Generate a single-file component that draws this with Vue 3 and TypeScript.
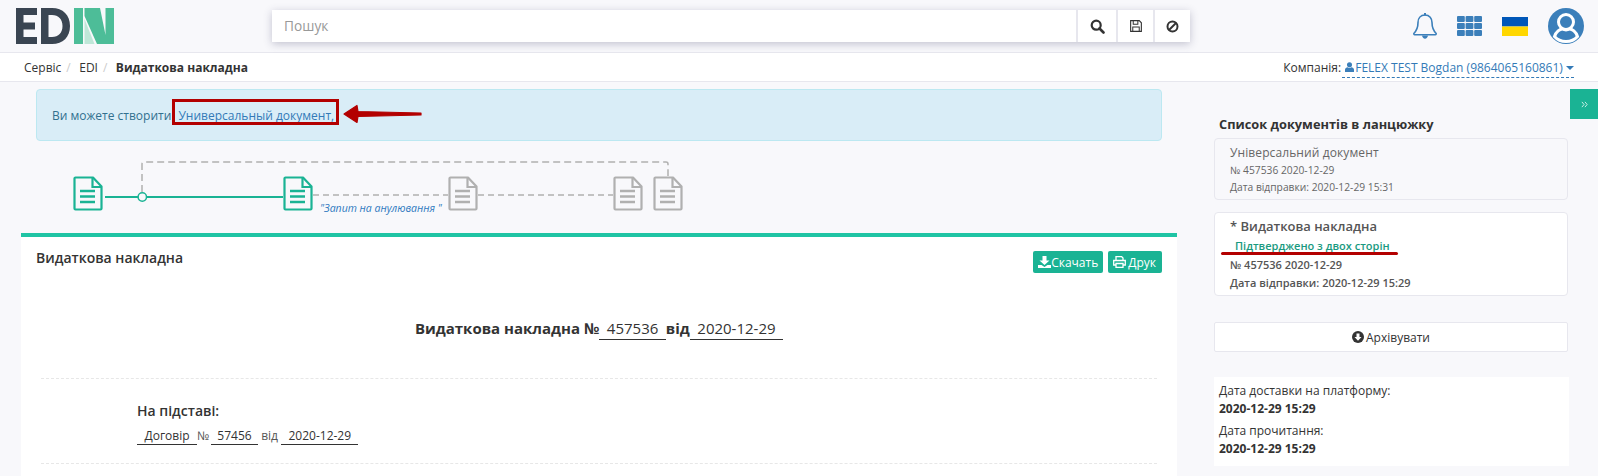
<script setup lang="ts">
const crumbs: string[] = ['Сервіс', 'EDI']
const gridCells: number[][] = [0, 1, 2].flatMap((r) => [0, 1, 2].map((c) => [c * 8.6, r * 7]))
const chainDocs = [
  { x: 53, c: '#1ab394' },
  { x: 263, c: '#1ab394' },
  { x: 428, c: '#b0b0b0' },
  { x: 593, c: '#b0b0b0' },
  { x: 633, c: '#b0b0b0' },
]
</script>

<template>
  <div class="page">
    <header class="top">
      <svg class="logo" width="98" height="36" viewBox="0 0 98 36" role="img" aria-label="EDIN">
        <path fill="#3a4552" d="M0 0h21v7H7.500v7.500H19v7H7.500V29H21v7H0zM25 0h11c11 0 18 7 18 18s-7 18-18 18H25zM32.500 7v22H36c6.500 0 10.500-4.200 10.500-11S42.500 7 36 7z" />
        <path fill="#4dbd98" d="M58 0h9v36h-9zM68.500 0H84l5.500 27v9H81L68.500 8zM89.500 0H98v36h-8.500z" />
        <path fill="#bfe7d8" d="M68.500 11L78.500 36H68.500z" />
      </svg>
      <div class="search">
        <div class="search-input">Пошук</div>
        <button class="search-btn" type="button" aria-label="Пошук">
          <svg width="15" height="15" viewBox="0 0 15 15"><circle cx="6.200" cy="6.200" r="4.500" fill="none" stroke="#333" stroke-width="2.200" /><path d="M9.500 9.500l4 4" stroke="#333" stroke-width="2.600" stroke-linecap="round" /></svg>
        </button>
        <button class="search-btn narrow" type="button" aria-label="Зберегти">
          <svg width="12" height="12" viewBox="0 0 13 13"><path d="M1 .7h9l2.300 2.300v9.300H.7V.7z" fill="#fff" stroke="#333" stroke-width="1.200" /><path d="M3.500 1v3.500h5V1M3 12V7.500h7V12" fill="none" stroke="#333" stroke-width="1.100" /></svg>
        </button>
        <button class="search-btn narrow" type="button" aria-label="Скасувати">
          <svg width="13" height="13" viewBox="0 0 13 13"><circle cx="6.500" cy="6.500" r="5" fill="none" stroke="#333" stroke-width="2" /><path d="M3 10l7-7" stroke="#333" stroke-width="2" /></svg>
        </button>
      </div>
      <div class="top-icons">
        <svg width="24" height="26" viewBox="0 0 24 26"><path d="M12 2C7.500 2 5 5.300 5 9.500c0 5-1.200 8-4.200 11 0 .8 0 1.200.7 1.200h21c.7 0 .7-.4.7-1.200-3-3-4.200-6-4.200-11C19 5.300 16.500 2 12 2z" fill="none" stroke="#3b7fba" stroke-width="1.600" stroke-linejoin="round" /><path d="M11 0h2v2.400h-2z" fill="#3b7fba" /><path d="M9 22.500c.3 2 1.500 3.200 3 3.200s2.700-1.200 3-3.200z" fill="#3b7fba" /></svg>
        <svg width="25" height="20" viewBox="0 0 25 20"><rect v-for="(p, i) in gridCells" :key="i" :x="p[0]" :y="p[1]" width="7.800" height="6" rx="1" fill="#3b7fba" /></svg>
        <svg width="26" height="19" viewBox="0 0 26 19"><rect width="26" height="9.500" fill="#0057b8" /><rect y="9.500" width="26" height="9.500" fill="#ffd700" /></svg>
        <svg width="36" height="36" viewBox="0 0 36 36"><circle cx="18" cy="18" r="18" fill="#3b7fba" /><circle cx="18" cy="14" r="7.500" fill="none" stroke="#fff" stroke-width="3" /><path d="M6.500 28.500c1.500-5 5.500-7.500 8-7.500 2 1 5 1 7 0 2.500 0 6.500 2.500 8 7.500-3 3.500-7 5-11.500 5S9.500 32 6.500 28.500z" fill="none" stroke="#fff" stroke-width="3" /></svg>
      </div>
    </header>

    <nav class="crumbs">
      <div class="crumb-list">
        <template v-for="c in crumbs" :key="c"><span>{{ c }}</span><span class="sep">/</span></template>
        <strong>Видаткова накладна</strong>
      </div>
      <div class="company">
        <span>Компанія:</span>
        <a class="company-link">
          <svg width="9" height="10" viewBox="0 0 10 11"><circle cx="5" cy="3" r="2.800" fill="#3b7fba" /><path d="M0 11V8.500C0 6.800 1.500 6 3 5.700c1.200.8 2.800.8 4 0C8.500 6 10 6.800 10 8.500V11z" fill="#3b7fba" /></svg>
          FELEX TEST Bogdan (9864065160861)
          <i class="caret"></i>
        </a>
      </div>
    </nav>

    <div class="body">
      <main class="main">
        <div class="alert">
          Ви можете створити
          <a class="alert-link">Универсальный документ,</a>
          <span class="red-box"></span>
          <svg class="red-arrow" width="80" height="24" viewBox="0 0 80 24"><path d="M1 12L14 3.500l1 6 63 1.500v2l-63 1.500-1 6z" fill="#b30000" stroke="#b30000" stroke-width="1.200" stroke-linejoin="round" /></svg>
        </div>

        <div class="chain">
          <svg width="720" height="70" viewBox="0 0 720 70">
            <path d="M122 33V5a2 2 0 0 1 2-2h522a2 2 0 0 1 2 2v12" fill="none" stroke="#b0b0b0" stroke-width="1.500" stroke-dasharray="7 4" />
            <path d="M85 38h178" stroke="#1ab394" stroke-width="2" />
            <circle cx="122.300" cy="38" r="4.200" fill="#f8f8fb" stroke="#1ab394" stroke-width="1.500" />
            <path d="M293 36h135M458 36h135" stroke="#b0b0b0" stroke-width="1.500" stroke-dasharray="6 4" />
            <g v-for="d in chainDocs" :key="d.x" :transform="`translate(${d.x} 17)`">
              <path d="M1.500 2.500a1 1 0 0 1 1-1H20l8.500 9v22a1 1 0 0 1-1 1H2.500a1 1 0 0 1-1-1z" fill="#f8f8fb" :stroke="d.c" stroke-width="2.200" stroke-linejoin="round" />
              <path d="M19.500 1.500v9.500h9" fill="none" :stroke="d.c" stroke-width="2.200" />
              <path d="M7 15h15M7 20.500h15M7 26h15" :stroke="d.c" stroke-width="2.400" />
            </g>
            <text x="300" y="53" class="chain-label">"Запит на анулювання "</text>
          </svg>
        </div>

        <section class="panel">
          <div class="panel-head">
            <h2>Видаткова накладна</h2>
            <div class="panel-actions">
              <button class="green-btn" type="button">
                <svg width="13" height="12" viewBox="0 0 13 12"><path d="M4.500 0h4v4.500h3L6.500 9 1.500 4.500h3zM0 9h3.500l3 2 3-2H13v3H0z" fill="#fff" /></svg>Скачать
              </button>
              <button class="green-btn gap" type="button">
                <svg width="13" height="12" viewBox="0 0 13 12"><path d="M3 4V.5h5.500L10 2v2M3 9H.7V4.500h11.600V9H10M3 7.500h7v4H3z" fill="none" stroke="#fff" stroke-width="1.300" /></svg>Друк
              </button>
            </div>
          </div>
          <div class="doc-title">
            <strong>Видаткова накладна №</strong><span class="fill">457536</span><strong>від</strong><span class="fill">2020-12-29</span>
          </div>
          <hr class="dash first" />
          <div class="basis">
            <h3>На підставі:</h3>
            <div class="basis-line">
              <span class="fill-sm wide">Договір</span><span class="mid no">№</span><span class="fill-sm slim">57456</span><span class="mid">від</span><span class="fill-sm">2020-12-29</span>
            </div>
          </div>
          <hr class="dash" />
        </section>
      </main>

      <aside class="side">
        <h4>Список документів в ланцюжку</h4>
        <div class="card muted">
          <div class="card-title">Універсальний документ</div>
          <div class="small">№ 457536 2020-12-29</div>
          <div class="small">Дата відправки: 2020-12-29 15:31</div>
        </div>
        <div class="card active">
          <div class="card-title strong">* Видаткова накладна</div>
          <div class="status">Підтверджено з двох сторін</div>
          <span class="red-line"></span>
          <div class="small semi">№ 457536 2020-12-29</div>
          <div class="small semi">Дата відправки: 2020-12-29 15:29</div>
        </div>
        <button class="archive" type="button">
          <svg width="12" height="12" viewBox="0 0 12 12"><circle cx="6" cy="6" r="6" fill="#333" /><path d="M4.500 2.500h3V6h2L6 9.700 2.500 6h2z" fill="#fff" /></svg>Архівувати
        </button>
        <div class="dates">
          <div>Дата доставки на платформу:</div>
          <strong>2020-12-29 15:29</strong>
          <div class="second">Дата прочитання:</div>
          <strong>2020-12-29 15:29</strong>
        </div>
      </aside>
      <div class="toggle">
        <svg width="7" height="7" viewBox="0 0 8 8"><path d="M1 1l2.500 3L1 7M4.500 1L7 4 4.500 7" fill="none" stroke="#cfeee6" stroke-width="1.100" /></svg>
      </div>
    </div>
  </div>
</template>

<style>
html, body { margin: 0; background: #f8f8fb; }
</style>

<style scoped>
.page {
  width: 1598px;
  height: 476px;
  overflow: hidden;
  background: #f8f8fb;
  color: #333;
  font-family: "Open Sans", "Noto Sans", sans-serif;
  font-size: 12px;
  line-height: 17px;
}
.top {
  height: 52px;
  box-sizing: border-box;
  padding: 8px 14px 0 16px;
  display: flex;
  align-items: flex-start;
}
.logo { flex: none; }
.search {
  margin: 2px 0 0 158px;
  width: 918px;
  height: 32px;
  display: flex;
  background: #fff;
  box-shadow: 0 2px 8px rgba(70, 70, 110, .3);
}
.search-input {
  flex: 1;
  padding: 0 12px;
  line-height: 32px;
  font-size: 13.700px;
  color: #999;
}
.search-btn {
  width: 40px;
  padding: 0;
  background: #fff;
  border: 0;
  border-left: 2px solid #e7e7ee;
  display: flex;
  align-items: center;
  justify-content: center;
}
.search-btn.narrow { width: 37px; }
.top-icons {
  margin-left: auto;
  display: flex;
  align-items: center;
  height: 36px;
  gap: 20px;
}
.crumbs {
  box-sizing: border-box;
  background: #fff;
  border-top: 1px solid #e7e7ee;
  border-bottom: 1px solid #e7e7ee;
  padding: 0 24px;
  height: 30px;
  display: flex;
  align-items: center;
  justify-content: space-between;
}
.crumb-list { display: flex; align-items: center; }
.crumb-list strong { font-size: 12px; font-weight: 700; }
.sep { color: #ccc; margin: 0 8.500px 0 5px; }
.company-link {
  color: #337ab7;
  border-bottom: 1px dashed #337ab7;
  padding: 0 0 1px 3px;
  margin-left: 1px;
}
.company-link svg { margin-right: -2px; }
.caret {
  display: inline-block;
  width: 0;
  height: 0;
  border: 4px solid transparent;
  border-top-color: #337ab7;
  border-bottom: 0;
  vertical-align: 2px;
}
.body { display: flex; position: relative; }
.main {
  width: 1156px;
  margin-left: 21px;
  flex: none;
}
.alert {
  position: relative;
  margin: 7px 15px 0;
  height: 52px;
  box-sizing: border-box;
  padding: 17px 15px;
  background: #d9edf7;
  border: 1px solid #bce8f1;
  border-radius: 4px;
  color: #31708f;
}
.alert-link { color: #337ab7; margin-left: 4px; }
.red-box {
  position: absolute;
  left: 135px;
  top: 9px;
  width: 167px;
  height: 26px;
  box-sizing: border-box;
  border: 3px solid #b30000;
}
.red-arrow { position: absolute; left: 306px; top: 12px; }
.chain { height: 92px; padding-top: 18px; box-sizing: border-box; }
.chain svg { display: block; margin-left: -1px; }
.chain-label {
  font-family: "Open Sans", sans-serif;
  font-size: 10.500px;
  font-style: italic;
  fill: #2f78bf;
}
.panel {
  background: #fff;
  border-top: 4px solid #1fc4a4;
  height: 260px;
  padding: 0 15px;
  box-sizing: border-box;
}
.panel-head {
  display: flex;
  justify-content: space-between;
  align-items: flex-start;
  padding-top: 10px;
  height: 60px;
  box-sizing: border-box;
}
.panel-head h2 { margin: 1px 0 0; font-size: 14px; line-height: 20px; font-weight: 600; }
.panel-actions { display: flex; padding-top: 4px; }
.green-btn {
  height: 22px;
  padding: 0 5px;
  display: flex;
  align-items: center;
  background: #1ab394;
  border: 0;
  border-radius: 2px;
  color: #fff;
  font: 12px "Open Sans", sans-serif;
}
.green-btn.gap { margin-left: 5px; gap: 2px; padding-right: 6px; }
.doc-title {
  margin-top: 19px;
  text-align: center;
  font-size: 15px;
  line-height: 24px;
}
.doc-title strong { font-weight: 700; }
.fill {
  display: inline-block;
  border-bottom: 1px solid #333;
  padding: 0 7.500px;
  line-height: 21px;
}
.dash { border: 0; border-top: 1px dashed #e7e7e7; margin: 0 5px; }
.dash.first { margin-top: 38px; }
.basis { padding-left: 101px; height: 84px; box-sizing: border-box; padding-top: 22px; }
.basis h3 { margin: 0 0 6px; font-size: 14px; line-height: 20px; font-weight: 600; }
.basis-line { display: flex; align-items: baseline; }
.fill-sm { border-bottom: 1px solid #333; padding: 0 7px; line-height: 17px; }
.fill-sm.wide { padding: 0 7.500px; }
.fill-sm.slim { padding: 0 6px; }
.mid { margin: 0 3.500px; color: #555; }
.mid.no { margin: 0 2px 0 0; }
.side {
  width: 354px;
  margin-left: 37px;
  flex: none;
}
.side h4 {
  margin: 33px 0 5px 5px;
  font-size: 12.800px;
  line-height: 18px;
  font-weight: 700;
}
.card {
  position: relative;
  box-sizing: border-box;
  border: 1px solid #e7e7ee;
  border-radius: 4px;
  padding: 4px 15px;
}
.card.muted { height: 62px; color: #666; }
.card.active { height: 84px; margin-top: 12px; background: #fff; color: #555; padding-top: 3px; }
.card-title { font-size: 12px; line-height: 19px; letter-spacing: .1px; }
.card-title.strong { font-size: 13px; font-weight: 600; line-height: 20px; letter-spacing: 0; }
.small { font-size: 10.250px; line-height: 17px; }
.small.semi { font-weight: 600; line-height: 18px; font-size: 11px; }
.status {
  color: #1a9a80;
  font-size: 11px;
  font-weight: 600;
  padding-left: 5px;
  line-height: 19px;
  margin-bottom: 1px;
}
.red-line {
  position: absolute;
  left: 6px;
  top: 39px;
  width: 177px;
  height: 3px;
  border-radius: 2px;
  background: #b30000;
}
.archive {
  display: flex;
  align-items: center;
  justify-content: center;
  gap: 2px;
  width: 100%;
  height: 30px;
  margin-top: 26px;
  background: #fff;
  border: 1px solid #e7e7ee;
  border-radius: 2px;
  color: #333;
  font: 12px "Open Sans", sans-serif;
}
.dates {
  margin-top: 25px;
  width: 355px;
  height: 89px;
  box-sizing: border-box;
  background: #fff;
  padding: 5px 5px;
  line-height: 18px;
}
.dates strong { display: block; font-weight: 700; }
.second { margin-top: 4px; }
.toggle {
  position: absolute;
  right: 0;
  top: 7px;
  width: 28px;
  height: 30px;
  background: #1ab394;
  display: flex;
  align-items: center;
  justify-content: center;
}
</style>
